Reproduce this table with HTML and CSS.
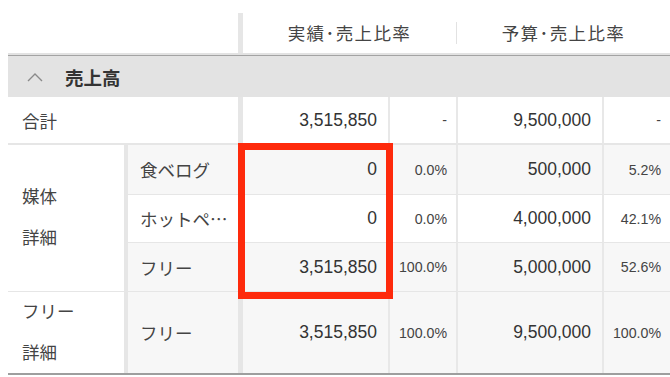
FILE: index.html
```html
<!DOCTYPE html>
<html lang="ja">
<head>
<meta charset="utf-8">
<link rel="stylesheet" href="styles.css">
</head>
<body>
<div class="page">
  <div class="head">
    <div class="head-blank"></div>
    <div class="head-cell">実績<span class="dot">･</span>売上比率</div>
    <div class="head-sep"></div>
    <div class="head-cell grow">予算<span class="dot">･</span>売上比率</div>
  </div>
  <div class="section">
    <svg class="chev" width="16" height="10" viewBox="0 0 16 10"><polyline points="1,9 8,2 15,9" fill="none" stroke="#8a8a8a" stroke-width="1.4"/></svg>
    <span class="section-title">売上高</span>
  </div>
  <div class="grid">
    <div class="cell label span2 r-total">合計</div>
    <div class="cell num r-total">3,515,850</div>
    <div class="cell pct r-total">-</div>
    <div class="cell num r-total">9,500,000</div>
    <div class="cell pct last r-total">-</div>

    <div class="cell label group g1">媒体<br>詳細</div>
    <div class="cell sub gray">食ベログ</div>
    <div class="cell num gray">0</div>
    <div class="cell pct gray">0.0%</div>
    <div class="cell num gray">500,000</div>
    <div class="cell pct last gray">5.2%</div>

    <div class="cell sub">ホットペ<span class="jp">…</span></div>
    <div class="cell num">0</div>
    <div class="cell pct">0.0%</div>
    <div class="cell num">4,000,000</div>
    <div class="cell pct last">42.1%</div>

    <div class="cell sub gray">フリー</div>
    <div class="cell num gray">3,515,850</div>
    <div class="cell pct gray">100.0%</div>
    <div class="cell num gray">5,000,000</div>
    <div class="cell pct last gray">52.6%</div>

    <div class="cell label group bottom">フリー<br>詳細</div>
    <div class="cell sub gray bottom">フリー</div>
    <div class="cell num gray bottom">3,515,850</div>
    <div class="cell pct gray bottom">100.0%</div>
    <div class="cell num gray bottom">9,500,000</div>
    <div class="cell pct last gray bottom">100.0%</div>

    <div class="highlight"></div>
  </div>
</div>
</body>
</html>
```

FILE: styles.css
```css
html, body {
  margin: 0;
  padding: 0;
  background: #ffffff;
}
body {
  font-family: "Liberation Sans", "Noto Sans CJK JP", sans-serif;
  color: #3a3a3a;
  width: 670px;
  height: 377px;
  overflow: hidden;
}
.page {
  padding-left: 8px;
}
.head {
  display: flex;
  height: 53px;
  align-items: flex-end;
}
.head-blank {
  width: 230px;
  height: 40px;
  border-right: 5px solid #e6e6e6;
}
.head-cell {
  width: 213px;
  height: 53px;
  box-sizing: border-box;
  padding-top: 23px;
  line-height: 20px;
  font-size: 17.5px;
  letter-spacing: 1.4px;
  text-align: center;
  color: #444;
}
.head-cell .dot {
  font-family: "Noto Sans CJK JP", sans-serif;
}
.head-cell.grow {
  flex: 1;
}
.head-sep {
  width: 1px;
  height: 22px;
  background: #e2e2e2;
  align-self: flex-start;
  margin-top: 22px;
}
.section {
  height: 41px;
  border-top: 2px solid #e2e2e2;
  box-shadow: inset 0 1px 0 #a3a3a3;
  padding-top: 1px;
  background: #e3e3e3;
  display: flex;
  align-items: center;
}
.chev {
  margin-left: 19px;
  margin-right: 22px;
}
.section-title {
  font-size: 18.5px;
  font-weight: bold;
  color: #333;
}
.grid {
  position: relative;
  display: grid;
  grid-template-columns: 120px 115px 147px 68px 146px 66px;
  grid-template-rows: 48px 50px 48px 49px 81px;
  border-bottom: 2px solid #9e9e9e;
}
.cell {
  box-sizing: border-box;
  display: flex;
  align-items: center;
  background: #ffffff;
  border-bottom: 1px solid #e6e6e6;
  border-right: 2px solid #e8e8e8;
  white-space: nowrap;
}
.cell.gray {
  background: #f7f7f7;
}
.cell.last {
  border-right: none;
}
.cell.bottom {
  border-bottom: none;
}
.cell.r-total {
  border-bottom: 2px solid #e6e6e6;
}
.label {
  padding-left: 14px;
  font-size: 17.5px;
  color: #444;
  border-right: 4px solid #e6e6e6;
}
.label.span2 {
  grid-column: span 2;
  border-right: 5px solid #e6e6e6;
}
.group {
  line-height: 41px;
  background: #ffffff;
}
.g1 {
  grid-row: span 3;
}
.sub {
  padding-left: 12px;
  font-size: 17.5px;
  color: #444;
  border-right: 5px solid #e6e6e6;
}
.jp {
  font-family: "Noto Sans CJK JP", sans-serif;
}
.num {
  justify-content: flex-end;
  padding-right: 11px;
  font-size: 17.5px;
  color: #333;
}
.pct {
  justify-content: flex-end;
  padding-right: 9px;
  font-size: 14.2px;
  color: #444;
}
.highlight {
  position: absolute;
  left: 230px;
  top: 46px;
  width: 155px;
  height: 156px;
  box-sizing: border-box;
  border: 7px solid #fe2a0c;
  pointer-events: none;
}
```
